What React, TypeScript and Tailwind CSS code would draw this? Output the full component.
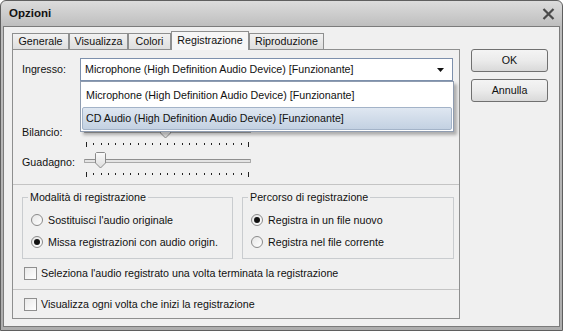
const font = "font-['Liberation_Sans',Arial,sans-serif]";

function Ticks() {
  return (
    <svg width="166" height="5" className="block ml-[2px]">
      {Array.from({ length: 23 }, (_, i) => {
        const x = Math.round(i * (162 / 22)) + 0.5;
        const edge = i === 0 || i === 22;
        return <line key={i} x1={x} x2={x} y1={edge ? 0 : 1} y2={edge ? 5 : 3} stroke="#222" />;
      })}
    </svg>
  );
}

function Slider({ thumb }: { thumb: number }) {
  return (
    <div className="w-[167px] h-[26px]">
      <div className="relative h-[17px]">
        <div className="absolute left-0 right-0 top-[7px] h-[4px] rounded-[1px] border border-[#a9a9a9] border-t-[#8f8f8f] bg-[#e4e4e4]" />
        <svg width="11" height="17" className="absolute top-0" style={{ left: thumb }}>
          <defs>
            <linearGradient id={`th${thumb}`} x1="0" y1="0" x2="0" y2="1">
              <stop offset="0" stopColor="#fbfbfb" />
              <stop offset="1" stopColor="#dcdcdc" />
            </linearGradient>
          </defs>
          <path d="M1.5 0.5 H9.5 L10.5 1.5 V11 L5.5 16 L0.5 11 V1.5 Z" fill={`url(#th${thumb})`} stroke="#8a8a8a" />
        </svg>
      </div>
      <div className="mt-[3px]">
        <Ticks />
      </div>
    </div>
  );
}

function Radio({ checked, label }: { checked?: boolean; label: string }) {
  return (
    <div className="flex h-[16px] items-center gap-[5px]">
      <div className="flex h-[12px] w-[12px] items-center justify-center rounded-full border border-[#8a8a8a] bg-gradient-to-br from-[#e6e6e6] to-[#ffffff]">
        {checked && <div className="h-[6px] w-[6px] rounded-full bg-[#111]" />}
      </div>
      <span>{label}</span>
    </div>
  );
}

function Check({ label }: { label: string }) {
  return (
    <div className="flex h-[13px] items-center gap-[4px]">
      <div className="h-[13px] w-[13px] border border-[#8f8f8f] bg-gradient-to-br from-[#e9e9e9] to-[#ffffff]" />
      <span>{label}</span>
    </div>
  );
}

function Group({ title, children }: { title: string; children: React.ReactNode }) {
  return (
    <fieldset className="border border-[#c9cccf] px-[5px] pb-[8px]">
      <legend className="px-[2px] leading-[13px]">{title}</legend>
      <div className="ml-[3px] mt-[8px] flex flex-col gap-[6px]">{children}</div>
    </fieldset>
  );
}

function Tab({ label, w, active }: { label: string; w: string; active?: boolean }) {
  if (active) {
    return (
      <div className={`relative z-10 -mb-px flex h-[19px] ${w} items-start justify-center border border-b-0 border-[#8e8f8f] bg-[#f6f6f6] pt-[2px]`}>
        {label}
      </div>
    );
  }
  return (
    <div className={`flex h-[16px] ${w} items-start justify-center border border-b-0 border-[#8e8f8f] bg-gradient-to-b from-[#f2f2f2] to-[#dedede] pt-[1px]`}>
      {label}
    </div>
  );
}

function Button({ label }: { label: string }) {
  return (
    <div className="flex h-[23px] w-[77px] items-center justify-center rounded-[3px] border border-[#707070] bg-gradient-to-b from-[#f4f4f4] via-[#ebebeb] to-[#d9d9d9]">
      {label}
    </div>
  );
}

export default function App() {
  return (
    <div className={`${font} text-[10.7px] leading-[13px] text-[#111]`}>
      <div className="flex h-[331px] w-[563px] flex-col rounded-t-[6px] border border-[#5f5f5f] bg-[linear-gradient(#dcdcdc,#bdbdbd_26px,#adadad)]">
        <div className="flex h-[25px] items-center justify-between pl-[8px] pr-[7px]">
          <span className="text-[11.5px] font-bold">Opzioni</span>
          <svg width="13" height="12" viewBox="0 0 13 12">
            <path d="M1.5 1 L11.5 11 M11.5 1 L1.5 11" stroke="#4a4a4a" strokeWidth="2.2" />
          </svg>
        </div>

        <div className="mx-[2px] mb-[3px] flex flex-1 border border-[#7b7b7b] bg-[#f0f0f0] pl-[8px] pt-[4px]">
          <div>
            <div className="flex h-[18px] items-end">
              <Tab label="Generale" w="w-[57px]" />
              <Tab label="Visualizza" w="w-[59px]" />
              <Tab label="Colori" w="w-[43px]" />
              <Tab label="Registrazione" w="w-[78px]" active />
              <Tab label="Riproduzione" w="w-[75px]" />
            </div>

            <div className="flex h-[270px] w-[448px] flex-col border border-[#8e8f8f] bg-[#f0f0f0] pl-[9px] pr-[6px]">
              <div className="mt-[8px] flex items-center">
                <span className="w-[58px]">Ingresso:</span>
                <div className="relative z-20 h-[23px] w-[373px]">
                  <div className="flex h-full items-center justify-between border border-[#7d90ac] bg-white pl-[4px] pr-[8px]">
                    <span>Microphone (High Definition Audio Device) [Funzionante]</span>
                    <svg width="7" height="4" viewBox="0 0 7 4">
                      <path d="M0 0 H7 L3.5 4 Z" fill="#111" />
                    </svg>
                  </div>
                  <div className="absolute left-0 top-[23px] flex h-[51px] w-[374px] flex-col border border-[#8f9cb0] bg-white p-px shadow-[3px_3px_3px_rgba(0,0,0,0.28)]">
                    <div className="flex h-[24px] items-center pl-[4px]">
                      Microphone (High Definition Audio Device) [Funzionante]
                    </div>
                    <div className="flex h-[23px] items-center rounded-[2px] border border-[#a3b3c8] bg-gradient-to-b from-[#dfe7f1] to-[#c3d1e2] pl-[3px]">
                      CD Audio (High Definition Audio Device) [Funzionante]
                    </div>
                  </div>
                </div>
              </div>

              <div className="mt-[41px] flex items-start">
                <span className="mt-[4px] w-[62px]">Bilancio:</span>
                <Slider thumb={76} />
              </div>

              <div className="mt-[4px] flex items-start">
                <span className="mt-[4px] w-[62px]">Guadagno:</span>
                <Slider thumb={11} />
              </div>

              <div className="-ml-[9px] -mr-[6px] mt-[6px] h-px bg-[#c4c4c4]" />

              <div className="mt-[6px] grid grid-cols-[211px_212px] gap-[9px]">
                <Group title="Modalità di registrazione">
                  <Radio label="Sostituisci l'audio originale" />
                  <Radio checked label="Missa registrazioni con audio origin." />
                </Group>
                <Group title="Percorso di registrazione">
                  <Radio checked label="Registra in un file nuovo" />
                  <Radio label="Registra nel file corrente" />
                </Group>
              </div>

              <div className="ml-[2px] mt-[8px]">
                <Check label="Seleziona l'audio registrato una volta terminata la registrazione" />
              </div>

              <div className="-ml-[9px] -mr-[6px] mt-[9px] h-px bg-[#c4c4c4]" />

              <div className="ml-[2px] mt-[8px]">
                <Check label="Visualizza ogni volta che inizi la registrazione" />
              </div>
            </div>
          </div>

          <div className="ml-[11px] mt-[18px] flex flex-col gap-[7px]">
            <Button label="OK" />
            <Button label="Annulla" />
          </div>
        </div>
      </div>
    </div>
  );
}
